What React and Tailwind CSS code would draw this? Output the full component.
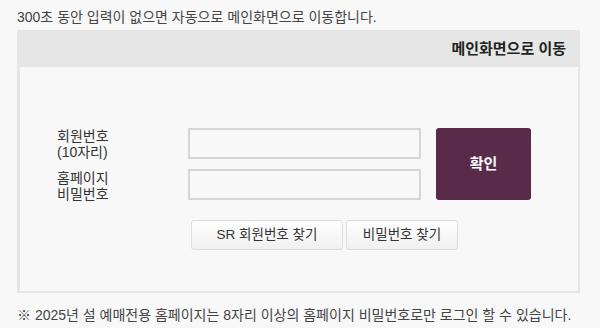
export default function App() {
    const font = { fontFamily: '"Liberation Sans", "Noto Sans CJK KR", sans-serif' };

    return (
        <main
            className="min-h-screen w-[600px] h-[328px] bg-[#f8f8f8] px-[17px] pt-[8px] text-[#444]"
            style={font}
        >
            <p className="h-[22px] text-[14px] leading-[18px]">
                300초 동안 입력이 없으면 자동으로 메인화면으로 이동합니다.
            </p>

            <section className="w-[563px] border-2 border-l-[3px] border-[#e6e6e6] bg-[#f8f8f8]">
                <div className="flex h-[35px] items-center justify-end bg-[#e6e6e6] pr-[12px]">
                    <h1 className="text-[15px] font-bold text-[#222]">
                        메인화면으로 이동
                    </h1>
                </div>

                <div className="h-[224px] pl-[37px] pt-[61px]">
                    <div className="flex">
                        <div className="flex w-[131px] flex-col gap-[9px] text-[14px] leading-[16px] text-[#333]">
                            <div className="h-[31px]">
                                회원번호
                                <br />
                                (10자리)
                            </div>
                            <div className="h-[31px] pt-[2px]">
                                홈페이지
                                <br />
                                비밀번호
                            </div>
                        </div>

                        <div className="flex w-[233px] flex-col gap-[10px]">
                            <input
                                type="text"
                                className="h-[31px] w-full border-2 border-[#d6d6d6] bg-[#f8f8f8] px-2 outline-none"
                            />
                            <input
                                type="password"
                                className="h-[31px] w-full border-2 border-[#d6d6d6] bg-[#f8f8f8] px-2 outline-none"
                            />
                        </div>

                        <button
                            type="button"
                            className="ml-[15px] h-[72px] w-[95px] rounded-[3px] bg-[#5a2a4b] text-[15px] font-bold text-white"
                        >
                            확인
                        </button>
                    </div>

                    <div className="ml-[134px] mt-[20px] flex gap-[3px]">
                        <button
                            type="button"
                            className="h-[30px] w-[152px] rounded-[3px] border border-[#dcdcdc] bg-gradient-to-b from-white to-[#f0f0f0] text-[13.5px] text-[#333]"
                        >
                            SR 회원번호 찾기
                        </button>
                        <button
                            type="button"
                            className="h-[30px] w-[112px] rounded-[3px] border border-[#dcdcdc] bg-gradient-to-b from-white to-[#f0f0f0] text-[13.5px] text-[#333]"
                        >
                            비밀번호 찾기
                        </button>
                    </div>
                </div>
            </section>

            <p className="mt-[13px] text-[14px] leading-[18px]">
                ※ 2025년 설 예매전용 홈페이지는 8자리 이상의 홈페이지 비밀번호로만 로그인 할 수 있습니다.
            </p>
        </main>
    );
}
